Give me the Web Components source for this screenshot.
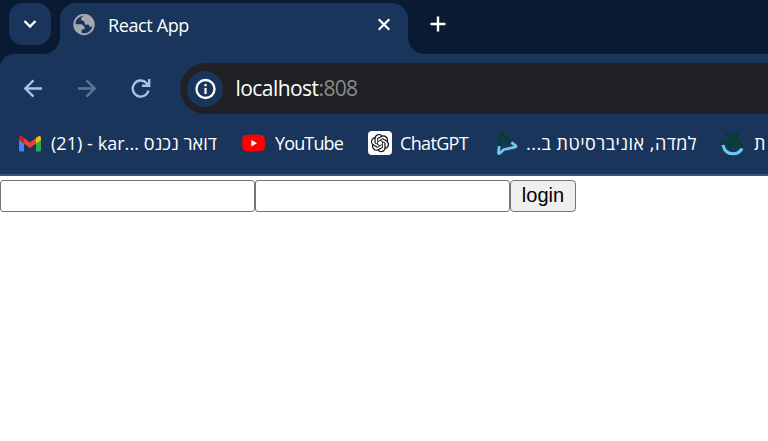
<!DOCTYPE html>
<html lang="en"><head><meta charset="utf-8"><title>React App</title>
<style>html,body{margin:0;height:100%;background:#fff;overflow:hidden}</style></head>
<body><browser-window></browser-window>
<script>
const define=(name,html,ready)=>customElements.define(name,class extends HTMLElement{
  constructor(){super();this.attachShadow({mode:'open'}).innerHTML=html;}
  connectedCallback(){if(ready)ready.call(this);}
});

/* A single-line label, tracked to the width given in its attribute. */
define('ui-label',`<style>:host{display:block;flex:none;white-space:nowrap}span{display:inline-block}</style><span><slot></slot></span>`,function(){
  const s=this.shadowRoot.querySelector('span'),w=+this.getAttribute('width');
  if(w){const n=this.textContent.length;s.style.letterSpacing=((w-s.getBoundingClientRect().width)/n)+'px';this.style.width=w+'px';}
});

define('tab-search',`<style>:host{display:flex;align-items:center;justify-content:center;flex:none;width:42px;height:42px;border-radius:14px;background:#1a355b}</style>
<svg width="14" height="10" viewBox="0 0 14 10"><path d="M1.500 2 7 7.500 12.500 2" fill="none" stroke="#fff" stroke-width="2.300"/></svg>`);

define('browser-tab',`<style>:host{display:flex;flex:none;box-sizing:border-box;width:348px;height:51px;padding:0 17px 8px 13px;align-items:center;background:#1a355b;border-radius:16px 16px 0 0;color:#fff;position:relative}
:host::before,:host::after{content:"";position:absolute;bottom:0;width:16px;height:16px}
:host::before{left:-16px;background:radial-gradient(circle at 0 0,transparent 15.5px,#1a355b 16px)}
:host::after{right:-16px;background:radial-gradient(circle at 100% 0,transparent 15.5px,#1a355b 16px)}
.t{flex:1;margin-left:13px}</style>
<svg width="22" height="22" viewBox="0 0 22 22"><circle cx="11" cy="10.500" r="9.700" fill="none" stroke="#a5a8ae" stroke-width="2"/><path d="M12.500 1C10 2.200 8 3.200 8 5c0 1.700 2 1.500 3 2.300 1 .9.200 2.400 1.200 3.200 1.200.9 2.200-.3 3.300.3 1.200.8.600 2 2 2h3.300A10.500 10.500 0 0 0 12.500 1ZM1 10.200h6.200c2.500 0 4.500 1.800 4.500 4 .1.800-.5 1.200-1.500 1.200H8.600v4.700C4.200 19.200 1 15.200 1 10.200Z" fill="#a5a8ae"/></svg>
<div class="t"><slot></slot></div>
<svg width="14" height="14" viewBox="0 0 14 14"><path d="m1.700 1.200 10.600 10.600m0-10.600L1.700 11.800" stroke="#fff" stroke-width="2.200"/></svg>`);

define('tab-strip',`<style>:host{display:flex;height:54px;box-sizing:border-box;padding:3px 0 0 9px;background:#0a1a32;font-size:18px}
browser-tab{margin-left:9px}.plus{margin:13px 0 0 22px}</style>
<tab-search></tab-search><browser-tab><ui-label width="81">React App</ui-label></browser-tab>
<svg class="plus" width="16" height="16" viewBox="0 0 16 16"><path d="M8 .5v15M.5 8h15" stroke="#fff" stroke-width="2.400"/></svg>`);

define('address-bar',`<style>:host{display:flex;align-items:center;flex:1;height:51px;box-sizing:border-box;padding-left:7px;border-radius:26px 0 0 26px;background:#202124;color:#fff;font-size:21px}
.i{display:flex;align-items:center;justify-content:center;width:36px;height:36px;border-radius:50%;background:#1a355b;margin-right:12.5px}.p{color:#8a8b8d}ui-label{margin-top:-1px}</style>
<div class="i"><svg width="22" height="22" viewBox="0 0 22 22"><circle cx="11.500" cy="11" r="9" fill="none" stroke="#fff" stroke-width="2.300"/><path d="M11.500 10v6M11.500 6v2.200" stroke="#fff" stroke-width="2.200"/></svg></div>
<ui-label width="83">localhost</ui-label><ui-label class="p" width="39">:808</ui-label>`);

define('nav-bar',`<style>:host{display:flex;align-items:center;height:69px;box-sizing:border-box;padding-left:23px;background:#1a355b}
svg{flex:none}.f,.r{margin-left:34px}address-bar{margin-left:29px}</style>
<svg width="20" height="20" viewBox="0 0 20 20"><path d="M19 9.500H2.700M10.500 1.300 2.300 9.500l8.200 8.200" fill="none" stroke="#a8c0e8" stroke-width="2.400"/></svg>
<svg class="f" width="20" height="20" viewBox="0 0 20 20"><path d="M1 9.500h16.300M9.500 1.300l8.200 8.200-8.200 8.200" fill="none" stroke="#5d7599" stroke-width="2.400"/></svg>
<svg class="r" width="20" height="20" viewBox="0 0 20 20"><path d="M17.500 11.500a8 8 0 1 1-1.900-7.400L18 6.500M18.200 0v6.700H11" fill="none" stroke="#a8c0e8" stroke-width="2.400"/></svg>
<address-bar></address-bar>`);

define('book-mark',`<style>:host{display:flex;align-items:center;flex:none}::slotted(svg){flex:none;display:block}</style><slot name="icon"></slot><slot></slot>`);

define('bookmarks-bar',`<style>:host{display:flex;align-items:center;height:53px;box-sizing:border-box;padding:0 0 11px 18px;background:#1a355b;border-bottom:2px solid #3b547b;color:#fff;font-size:18px;overflow:hidden}
ui-label{margin-left:9px}.y{margin-left:24px}.c{margin-left:25px}.l{margin-left:28px}.a{margin-left:24px}.c ui-label,.l ui-label,.a ui-label{margin-left:8px}.a ui-label{margin-left:9px}</style>
<book-mark><svg slot="icon" width="24" height="18" viewBox="0 0 24 18"><g transform="translate(0 .5)"><path d="M1 4.500 6 8v9H2.500A1.500 1.500 0 0 1 1 15.500Z" fill="#4285f4"/><path d="m18 8 5-3.500v11a1.500 1.500 0 0 1-1.500 1.500H18Z" fill="#34a853"/><path d="M18 3.500 20 2c1.500-1.200 3-.2 3 1.500v2L18 9Z" fill="#fbbc04"/><path d="m6 3.500 6 4.500 6-4.500V9l-6 4.500L6 9Z" fill="#ea4335"/><path d="M1 3.500C1 1.200 3 .500 4.500 2L6 3.500V9L1 5.500Z" fill="#c5221f"/></g></svg><ui-label width="166">(21) - kar... דואר נכנס</ui-label></book-mark>
<book-mark class="y"><svg slot="icon" width="25" height="18" viewBox="0 0 25 18"><path transform="translate(.6 .5)" d="M4 .500Q12.500-.300 20 .500q2.500.300 3 2.500 1 5.500 0 11-.5 2.200-3 2.500-8 1-16 0-2.500-.3-3-2.500-1-5.500 0-11Q1.500.800 4 .500Z" fill="red"/><path d="M10.300 5.900v6.600L16 9.200Z" fill="#fff"/></svg><ui-label width="68">YouTube</ui-label></book-mark>
<book-mark class="c"><svg slot="icon" width="24" height="24" viewBox="0 0 24 24"><rect width="24" height="24" rx="4" fill="#fff"/><path transform="translate(2.900 2.900) scale(.76)" fill="#111" d="M22.2819 9.8211a5.9847 5.9847 0 0 0-.5157-4.9108 6.0462 6.0462 0 0 0-6.5098-2.9A6.0651 6.0651 0 0 0 4.9807 4.1818a5.9847 5.9847 0 0 0-3.9977 2.9 6.0462 6.0462 0 0 0 .7427 7.0966 5.98 5.98 0 0 0 .511 4.9107 6.051 6.051 0 0 0 6.5146 2.9001A5.9847 5.9847 0 0 0 13.2599 24a6.0557 6.0557 0 0 0 5.7718-4.2058 5.9894 5.9894 0 0 0 3.9977-2.9001 6.0557 6.0557 0 0 0-.7475-7.0729zm-9.022 12.6081a4.4755 4.4755 0 0 1-2.8764-1.0408l.1419-.0804 4.7783-2.7582a.7948.7948 0 0 0 .3927-.6813v-6.7369l2.02 1.1686a.071.071 0 0 1 .038.052v5.5826a4.504 4.504 0 0 1-4.4945 4.4944zm-9.6607-4.1254a4.4708 4.4708 0 0 1-.5346-3.0137l.142.0852 4.783 2.7582a.7712.7712 0 0 0 .7806 0l5.8428-3.3685v2.3324a.0804.0804 0 0 1-.0332.0615L9.74 19.9502a4.4992 4.4992 0 0 1-6.1408-1.6464zM2.3408 7.8956a4.485 4.485 0 0 1 2.3655-1.9728V11.6a.7664.7664 0 0 0 .3879.6765l5.8144 3.3543-2.0201 1.1685a.0757.0757 0 0 1-.071 0l-4.8303-2.7865A4.504 4.504 0 0 1 2.3408 7.872zm16.5963 3.8558L13.1038 8.364 15.1192 7.2a.0757.0757 0 0 1 .071 0l4.8303 2.7913a4.4944 4.4944 0 0 1-.6765 8.1042v-5.6772a.79.79 0 0 0-.407-.667zm2.0107-3.0231l-.142-.0852-4.7735-2.7818a.7759.7759 0 0 0-.7854 0L9.409 9.2297V6.8974a.0662.0662 0 0 1 .0284-.0615l4.8303-2.7866a4.4992 4.4992 0 0 1 6.6802 4.66zM8.3065 12.863l-2.02-1.1638a.0804.0804 0 0 1-.038-.0567V6.0742a4.4992 4.4992 0 0 1 7.3757-3.4537l-.142.0805L8.704 5.459a.7948.7948 0 0 0-.3927.6813zm1.0976-2.3654l2.602-1.4998 2.6069 1.4998v2.9994l-2.5974 1.4997-2.6067-1.4997Z"/></svg><ui-label width="68">ChatGPT</ui-label></book-mark>
<book-mark class="l"><svg slot="icon" width="22" height="24" viewBox="0 0 22 24" fill="none" stroke-width="2.800" stroke-linejoin="round"><path d="M3.500 15 4.500 2.500q.3-1.200 1.300-.2L15.500 12" stroke="#02402d"/><path d="M3.200 15 2.500 21.500q-.1 1.600 1.200.8L8 18.500l11-2.300q1.800-.500.300-1.900l-4-3" stroke="#6fc7ea"/></svg><ui-label dir="rtl" width="171">למדה, אוניברסיטת ב...</ui-label></book-mark>
<book-mark class="a"><svg slot="icon" width="24" height="26" viewBox="0 0 24 26" fill="none" stroke-width="2.700"><path d="M2 15q1.800 8.800 10 8.800 6.500 0 9.300-5.800" stroke="#6fc7ea" stroke-width="3"/><path d="M4.500 3.500 9 7q2 1.800 1 4.500L8.500 15.500M1.500 11.500 11 16.500M11.500 3l9.500 14-5-1M16.500 2.500l-1 5.500M14 8.500l-1.500 7" stroke="#02402d"/></svg><ui-label dir="rtl">ת</ui-label></book-mark>`);

define('login-form',`<style>:host{display:flex;padding-top:4px}
input,button{box-sizing:border-box;height:32px;margin:0;border:1px solid #767676;border-radius:3px;font:20px "Liberation Sans",Arial,sans-serif}
input{width:255px;background:#fff;padding:1px 2px}button{width:66px;padding:0 0 1px;background:#efefef;color:#000;border-radius:4px}</style>
<input type="text" aria-label="Username"><input type="password" aria-label="Password"><button>login</button>`);

define('browser-window',`<style>:host{display:block;font-family:"Open Sans","Noto Sans","DejaVu Sans",sans-serif}
.chrome{background:#0a1a32}nav-bar{border-top-left-radius:14px}</style>
<div class="chrome"><tab-strip></tab-strip><nav-bar></nav-bar><bookmarks-bar></bookmarks-bar></div><login-form></login-form>`);
</script></body></html>
